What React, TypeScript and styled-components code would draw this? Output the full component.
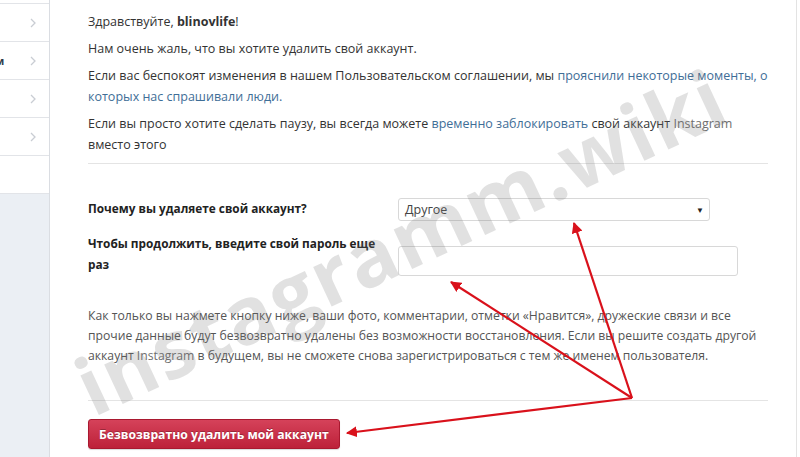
import styled, { createGlobalStyle } from 'styled-components';

const GlobalStyle = createGlobalStyle`
  html, body {
    margin: 0;
    padding: 0;
    background: #ffffff;
  }
  body {
    font-family: 'Open Sans', 'Liberation Sans', sans-serif;
    color: #333333;
  }
`;

const Page = styled.div`
  position: relative;
  display: flex;
  width: 800px;
  height: 457px;
  overflow: hidden;
  background: #ffffff;
`;

const Sidebar = styled.aside`
  width: 49px;
  flex-shrink: 0;
  display: flex;
  flex-direction: column;
  background: #ebeff4;
  border-right: 1px solid #dadde2;
`;

const SideItem = styled.div<{ $stub?: boolean }>`
  height: ${(p) => (p.$stub ? '3px' : '37px')};
  display: flex;
  align-items: center;
  justify-content: space-between;
  padding: 0 13px 0 0;
  background: #ffffff;
  border-bottom: 1px solid #e2e4e8;
  overflow: hidden;
`;

const SideText = styled.span`
  margin-left: -5px;
  font-size: 11px;
  font-weight: 700;
  color: #2f3a4a;
`;

const Chevron = () => (
  <svg width="6" height="10" viewBox="0 0 6 10">
    <path d="M1 1l4 4-4 4" fill="none" stroke="#c9cdd3" strokeWidth="1.3" />
  </svg>
);

const Main = styled.main`
  flex: 1;
  margin-right: 3px;
  border-right: 1px solid #e3e3e3;
  padding: 11px 0 0 38px;
`;

const Content = styled.div`
  width: 680px;
  font-size: 12.5px;
`;

const Para = styled.p`
  margin: 0 0 6px;
  line-height: 21px;
  color: #333333;
`;

const Link = styled.a`
  color: #3f6e97;
  text-decoration: none;
`;

const Divider = styled.hr<{ $top: number }>`
  margin: ${(p) => p.$top}px 0 0;
  border: 0;
  border-top: 1px solid #e4e4e4;
`;

const Form = styled.div`
  display: grid;
  grid-template-columns: 310px 1fr;
  row-gap: 12px;
  margin-top: 34px;
`;

const Label = styled.label`
  font-weight: 700;
  font-size: 11.8px;
  line-height: 21px;
  color: #222222;
`;

const Field = styled.div<{ $pad?: number }>`
  padding-top: ${(p) => p.$pad ?? 0}px;
`;

const Select = styled.div`
  width: 312px;
  height: 23px;
  box-sizing: border-box;
  display: flex;
  align-items: center;
  justify-content: space-between;
  padding: 0 5px 0 6px;
  border: 1px solid #d8d8d8;
  border-radius: 3px;
  background: #ffffff;
  font-size: 12.5px;
  color: #444444;
`;

const Caret = styled.span`
  font-size: 8px;
  color: #222222;
`;

const Input = styled.input`
  width: 340px;
  height: 30px;
  box-sizing: border-box;
  border: 1px solid #d8d8d8;
  border-radius: 3px;
  background: #ffffff;
`;

const Notice = styled.p`
  margin: 30px 0 0;
  font-size: 12.2px;
  line-height: 20px;
  color: #555555;
`;

const Muted = styled.span`
  color: #6e6e6e;
`;

const DeleteButton = styled.button`
  margin-top: 18px;
  height: 30px;
  padding: 0 10px;
  border: 1px solid #a9182f;
  border-radius: 3px;
  background: linear-gradient(#d5425a, #bd2139);
  color: #ffffff;
  font-family: 'Open Sans', 'Liberation Sans', sans-serif;
  font-weight: 700;
  font-size: 12.2px;
  text-shadow: 0 -1px 0 rgba(0, 0, 0, 0.25);
  box-shadow: 0 1px 1px rgba(0, 0, 0, 0.15);
`;

const Watermark = styled.div`
  position: absolute;
  left: 400px;
  top: 240px;
  transform: translate(-50%, -50%) rotate(-25deg);
  font-family: 'Open Sans', 'Liberation Sans', sans-serif;
  font-weight: 700;
  font-size: 80px;
  letter-spacing: 2px;
  color: rgba(120, 120, 120, 0.22);
  white-space: nowrap;
  pointer-events: none;
`;

const Arrows = styled.svg`
  position: absolute;
  left: 0;
  top: 0;
  pointer-events: none;
`;

const apex = { x: 632, y: 398 };
const tips = [
  { x: 574, y: 223 },
  { x: 451, y: 282 },
  { x: 347, y: 433 },
];

export default function App() {
  return (
    <>
      <GlobalStyle />
      <Page>
        <Sidebar>
          <SideItem $stub />
          <SideItem>
            <span />
            <Chevron />
          </SideItem>
          <SideItem>
            <SideText>м</SideText>
            <Chevron />
          </SideItem>
          <SideItem>
            <span />
            <Chevron />
          </SideItem>
          <SideItem>
            <span />
            <Chevron />
          </SideItem>
          <SideItem />
        </Sidebar>
        <Main>
          <Content>
            <Para>
              Здравствуйте, <b>blinovlife</b>!
            </Para>
            <Para>Нам очень жаль, что вы хотите удалить свой аккаунт.</Para>
            <Para>
              Если вас беспокоят изменения в нашем Пользовательском соглашении, мы{' '}
              <Link>прояснили некоторые моменты, о которых нас спрашивали люди.</Link>
            </Para>
            <Para>
              Если вы просто хотите сделать паузу, вы всегда можете{' '}
              <Link>временно заблокировать</Link> свой аккаунт <Muted>Instagram</Muted> вместо
              этого
            </Para>
            <Divider $top={8} />
            <Form>
              <Label>Почему вы удаляете свой аккаунт?</Label>
              <Field>
                <Select>
                  Другое
                  <Caret>▼</Caret>
                </Select>
              </Field>
              <Label>Чтобы продолжить, введите свой пароль еще раз</Label>
              <Field $pad={13}>
                <Input type="password" />
              </Field>
            </Form>
            <Notice>
              Как только вы нажмете кнопку ниже, ваши фото, комментарии, отметки «Нравится»,
              дружеские связи и все прочие данные будут безвозвратно удалены без возможности
              восстановления. Если вы решите создать другой аккаунт <Muted>Instagram</Muted> в
              будущем, вы не сможете снова зарегистрироваться с тем же именем пользователя.
            </Notice>
            <Divider $top={34} />
            <DeleteButton>Безвозвратно удалить мой аккаунт</DeleteButton>
          </Content>
        </Main>
        <Watermark>instagramm.wiki</Watermark>
        <Arrows width="800" height="457" viewBox="0 0 800 457">
          <defs>
            <marker
              id="head"
              viewBox="0 0 10 10"
              refX="9"
              refY="5"
              markerWidth="5"
              markerHeight="5"
              orient="auto"
            >
              <path d="M0 0L10 5L0 10z" fill="#d9111b" />
            </marker>
          </defs>
          {tips.map((t) => (
            <line
              key={`${t.x}-${t.y}`}
              x1={apex.x}
              y1={apex.y}
              x2={t.x}
              y2={t.y}
              stroke="#d9111b"
              strokeWidth="2.2"
              markerEnd="url(#head)"
            />
          ))}
        </Arrows>
      </Page>
    </>
  );
}
